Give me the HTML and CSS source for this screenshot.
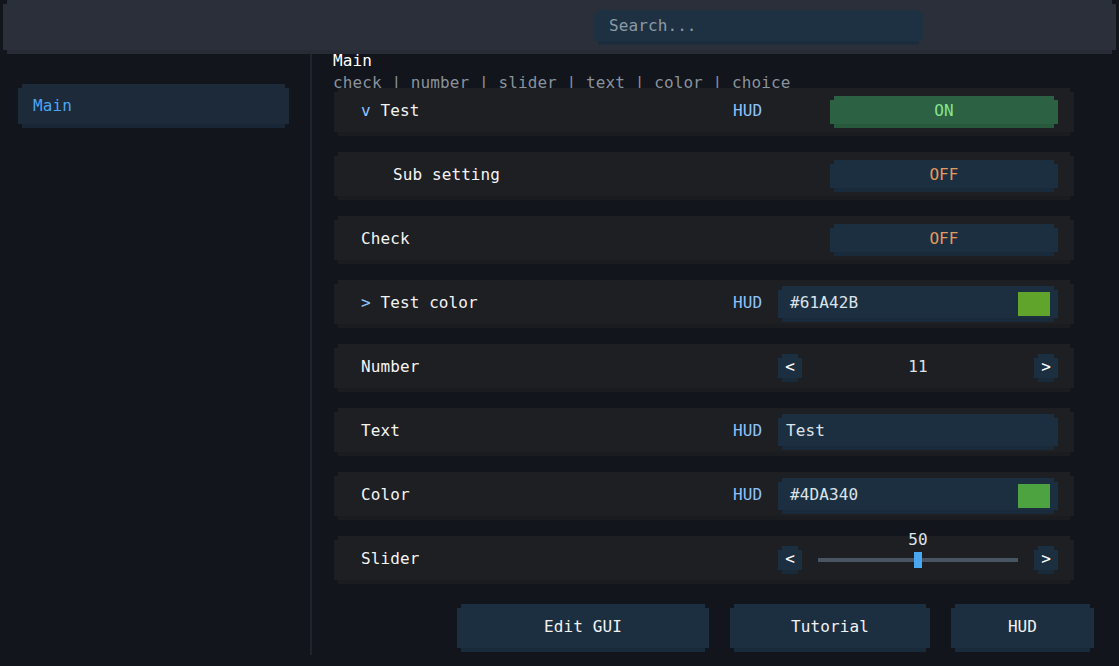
FILE: index.html
```html
<!DOCTYPE html>
<html>
<head>
    <title>Settings</title>
    <meta charset="UTF-8">
    <meta name="viewport" content="width=device-width, initial-scale=1.0">
    <link rel="stylesheet" href="styles.css">
</head>
<body>

<div class="screen">
    <header class="topbar px">
        <div class="search px">Search...</div>
    </header>

    <div class="main">
        <aside class="sidebar">
            <div class="category px active">Main</div>
        </aside>
        <div class="divider"></div>

        <section class="content">
            <div class="title">Main</div>
            <div class="subtitle">check | number | slider | text | color | choice</div>

            <div class="settings">
                <div class="row">
                    <div class="label"><span class="arrow">v</span> Test</div>
                    <span class="hud">HUD</span>
                    <div class="control">
                        <div class="toggle on px">ON</div>
                    </div>
                </div>

                <div class="row">
                    <div class="label sub">Sub setting</div>
                    <span class="hud"></span>
                    <div class="control">
                        <div class="toggle px">OFF</div>
                    </div>
                </div>

                <div class="row">
                    <div class="label">Check</div>
                    <span class="hud"></span>
                    <div class="control">
                        <div class="toggle px">OFF</div>
                    </div>
                </div>

                <div class="row">
                    <div class="label"><span class="arrow">&gt;</span> Test color</div>
                    <span class="hud">HUD</span>
                    <div class="control">
                        <div class="field px">
                            <span class="field-text">#61A42B</span>
                            <span class="swatch" style="background-color: #61a42b;"></span>
                        </div>
                    </div>
                </div>

                <div class="row">
                    <div class="label">Number</div>
                    <span class="hud"></span>
                    <div class="control spread">
                        <div class="step px">&lt;</div>
                        <span class="value">11</span>
                        <div class="step px">&gt;</div>
                    </div>
                </div>

                <div class="row">
                    <div class="label">Text</div>
                    <span class="hud">HUD</span>
                    <div class="control">
                        <div class="field px">
                            <span class="field-text plain">Test</span>
                        </div>
                    </div>
                </div>

                <div class="row">
                    <div class="label">Color</div>
                    <span class="hud">HUD</span>
                    <div class="control">
                        <div class="field px">
                            <span class="field-text">#4DA340</span>
                            <span class="swatch" style="background-color: #4da340;"></span>
                        </div>
                    </div>
                </div>

                <div class="row">
                    <div class="label">Slider</div>
                    <span class="hud"></span>
                    <div class="control spread">
                        <div class="step px">&lt;</div>
                        <div class="slider">
                            <span class="slider-value">50</span>
                            <div class="track"></div>
                            <div class="thumb"></div>
                        </div>
                        <div class="step px">&gt;</div>
                    </div>
                </div>
            </div>

            <div class="actions">
                <button class="action px edit">Edit GUI</button>
                <button class="action px tutorial">Tutorial</button>
                <button class="action px hud-btn">HUD</button>
            </div>
        </section>
    </div>
</div>

</body>
</html>
```

FILE: styles.css
```css
body {
    margin: 0;
    background-color: #13161d;
    color: #f2f2f2;
    font-family: "DejaVu Sans Mono", "Liberation Mono", monospace;
    font-size: 16px;
    letter-spacing: 0.1px;
    overflow: hidden;
}

.screen {
    width: 1119px;
    height: 666px;
    display: flex;
    flex-direction: column;
    background-color: #12151b;
}

/* stepped "pixel" corners used by every box */
.px,
.row::before {
    clip-path: polygon(4px 0, calc(100% - 4px) 0, calc(100% - 4px) 4px, 100% 4px,
        100% calc(100% - 4px), calc(100% - 4px) calc(100% - 4px), calc(100% - 4px) 100%,
        4px 100%, 4px calc(100% - 4px), 0 calc(100% - 4px), 0 4px, 4px 4px);
    box-shadow: inset 0 -4px 0 rgba(0, 0, 0, 0.08);
}

.topbar {
    height: 54px;
    margin: 0 3px;
    background-color: #2a2f3a;
    display: flex;
    align-items: center;
    padding-left: 591px;
    flex-shrink: 0;
}

.search {
    width: 329px;
    height: 35px;
    box-sizing: border-box;
    background-color: #1e3142;
    color: #8d9aa6;
    padding: 0 0 3px 15px;
    display: flex;
    align-items: center;
}

.main {
    flex: 1;
    display: flex;
}

.sidebar {
    width: 310px;
    flex-shrink: 0;
}

.category {
    margin: 30px 21px 0 18px;
    height: 44px;
    box-sizing: border-box;
    padding: 0 0 2px 15px;
    display: flex;
    align-items: center;
    background-color: #1c2a3a;
}

.category.active {
    color: #4aa6f3;
}

.divider {
    width: 2px;
    height: 601px;
    background-color: #1f242c;
}

.content {
    flex: 1;
    padding-left: 22px;
    display: flex;
    flex-direction: column;
}

.title {
    line-height: 14px;
    margin-top: 0;
    margin-left: -1px;
    color: #ffffff;
}

.subtitle {
    line-height: 14px;
    margin-top: 8px;
    margin-left: -1px;
    color: #8a929b;
}

.settings {
    margin-top: -2px;
    width: 740px;
    display: flex;
    flex-direction: column;
    gap: 16px;
}

.row {
    position: relative;
    isolation: isolate;
    height: 48px;
    display: flex;
    align-items: center;
    padding: 0 16px 0 27px;
}

.row::before {
    content: "";
    position: absolute;
    inset: 0;
    z-index: -1;
    background-color: #1e1f22;
}

.label {
    flex: 1;
    padding-bottom: 4px;
    color: #f4f4f4;
    white-space: pre;
}

.label.sub {
    padding-left: 32px;
}

.arrow {
    color: #8cc4ff;
}

.hud {
    width: 45px;
    padding-bottom: 4px;
    color: #8cc4ff;
}

.control {
    width: 280px;
    display: flex;
    justify-content: flex-end;
    align-items: center;
}

.control.spread {
    justify-content: space-between;
}

.toggle {
    width: 228px;
    height: 32px;
    box-sizing: border-box;
    padding-bottom: 4px;
    display: flex;
    align-items: center;
    justify-content: center;
    background-color: #1c2f40;
    color: #e39a5e;
}

.toggle.on {
    background-color: #2c6143;
    color: #86e58f;
}

.field {
    width: 280px;
    height: 36px;
    box-sizing: border-box;
    padding: 0 8px 0 12px;
    display: flex;
    align-items: center;
    justify-content: space-between;
    background-color: #1c2f40;
}

.field-text {
    padding-bottom: 4px;
    color: #dce3ea;
}

.field-text.plain {
    margin-left: -4px;
}

.swatch {
    width: 32px;
    height: 24px;
}

.step {
    width: 24px;
    height: 28px;
    box-sizing: border-box;
    padding-bottom: 4px;
    display: flex;
    align-items: center;
    justify-content: center;
    background-color: #1c2f40;
    color: #ffffff;
}

.value {
    padding-bottom: 4px;
    color: #dce3ea;
}

.slider {
    position: relative;
    width: 200px;
    height: 16px;
    display: flex;
    align-items: center;
}

.track {
    width: 100%;
    height: 4px;
    background-color: #4a5563;
}

.thumb {
    position: absolute;
    left: 96px;
    top: 0;
    width: 8px;
    height: 16px;
    background-color: #4aa8f0;
}

.slider-value {
    position: absolute;
    left: 0;
    right: 0;
    top: -19px;
    line-height: 14px;
    text-align: center;
    color: #dce3ea;
}

.actions {
    margin-top: 20px;
    padding-right: 25px;
    display: flex;
    justify-content: flex-end;
    gap: 21px;
}

.action {
    height: 48px;
    border: none;
    padding: 0 0 4px 0;
    background-color: #1c2f40;
    color: #f2f2f2;
    font-family: inherit;
    font-size: 16px;
    letter-spacing: 0.1px;
    cursor: pointer;
}

.action.edit {
    width: 252px;
}

.action.tutorial {
    width: 200px;
}

.action.hud-btn {
    width: 143px;
}
```
